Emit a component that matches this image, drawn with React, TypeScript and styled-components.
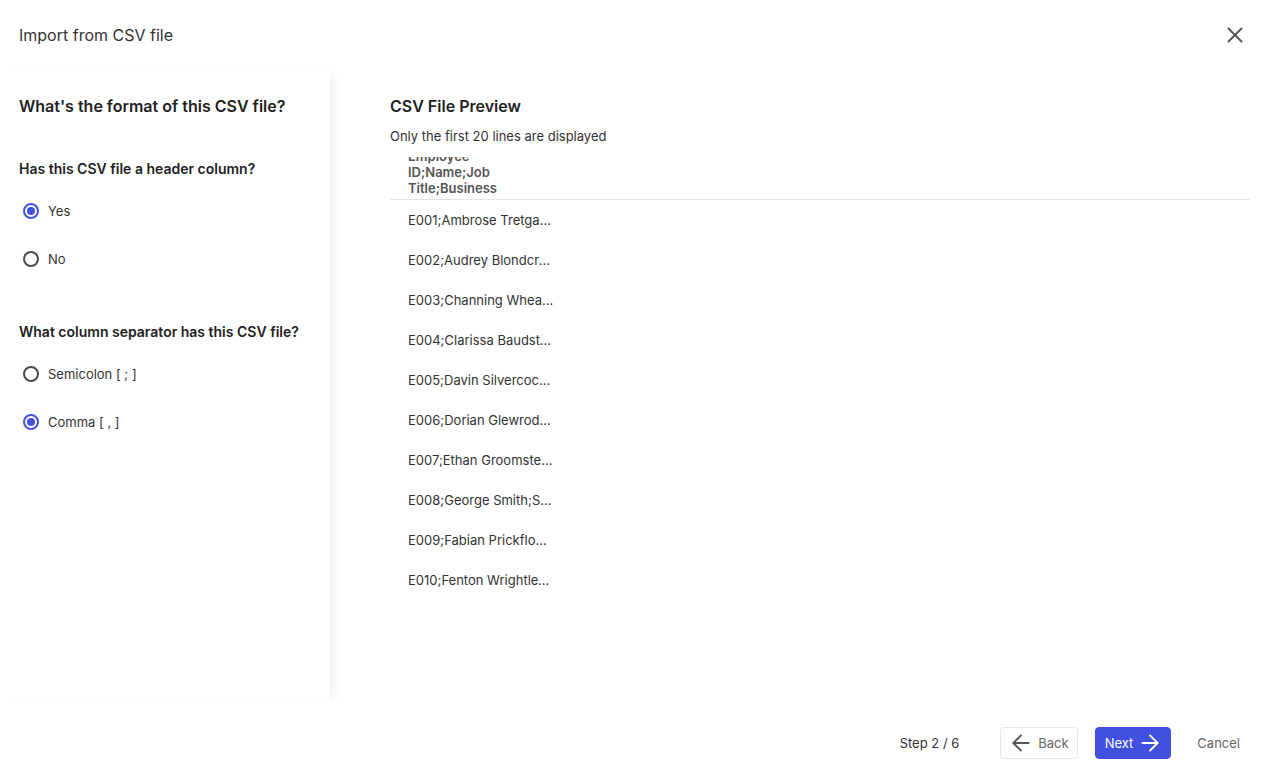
import React from "react";
import styled, { createGlobalStyle } from "styled-components";
import { ArrowLeft, ArrowRight, X } from "lucide-react";

const GlobalStyle = createGlobalStyle`
  html, body { margin: 0; padding: 0; background: #ffffff; }
  body { font-family: Inter, "Noto Sans", "Liberation Sans", sans-serif; color: #222; }
  * { box-sizing: border-box; }
`;

const Page = styled.div`
  width: 1269px;
  height: 775px;
  display: flex;
  flex-direction: column;
  background: #fff;
  overflow: hidden;
`;

const Header = styled.header`
  height: 70px;
  flex: none;
  display: flex;
  align-items: center;
  justify-content: space-between;
  padding: 0 21px 0 19px;
`;

const Title = styled.h1`
  margin: 0;
  font-size: 16px;
  font-weight: 400;
  color: #333;
  line-height: 24px;
`;

const CloseButton = styled.button`
  border: none;
  background: none;
  padding: 0;
  width: 26px;
  height: 28px;
  display: flex;
  align-items: center;
  justify-content: center;
  color: #555;
  cursor: pointer;
`;

const Body = styled.main`
  flex: 1;
  display: flex;
  min-height: 0;
`;

const Sidebar = styled.aside`
  width: 330px;
  flex: none;
  padding: 24px 19px 0;
  box-shadow: 7px 0 8px -4px rgba(0, 0, 0, 0.07);
  position: relative;
  z-index: 1;
`;

const Content = styled.section`
  flex: 1;
  padding: 24px 19px 0 60px;
  min-width: 0;
`;

const Heading = styled.h2`
  margin: 0;
  font-size: 16px;
  font-weight: 600;
  line-height: 24px;
  color: #222;
`;

const Question = styled.h3<{ $top: number }>`
  margin: ${(p) => p.$top}px 0 8px;
  font-size: 14px;
  font-weight: 600;
  line-height: 20px;
  color: #222;
`;

const RadioRow = styled.label`
  height: 48px;
  display: flex;
  align-items: center;
  gap: 9px;
  padding-left: 4px;
  font-size: 13px;
  color: #333;
  cursor: pointer;
`;

const RadioCircle = styled.span<{ $checked: boolean }>`
  width: 16px;
  height: 16px;
  border-radius: 50%;
  border: 2px solid ${(p) => (p.$checked ? "#4352e2" : "#4a4a4a")};
  display: flex;
  align-items: center;
  justify-content: center;
  flex: none;
  &::after {
    content: "";
    width: 8px;
    height: 8px;
    border-radius: 50%;
    background: ${(p) => (p.$checked ? "#4352e2" : "transparent")};
  }
`;

const Subtitle = styled.p`
  margin: 9px 0 0;
  font-size: 13px;
  line-height: 18px;
  color: #333;
`;

const Table = styled.div`
  margin-top: 12px;
`;

const HeaderRow = styled.div`
  height: 43px;
  border-bottom: 1px solid #e4e4e4;
  overflow: hidden;
  display: flex;
  align-items: flex-end;
  padding: 0 18px 3px;
`;

const HeaderCell = styled.div`
  width: 138px;
  font-size: 13px;
  font-weight: 600;
  line-height: 16px;
  color: #555;
`;

const DataRow = styled.div`
  height: 40px;
  display: flex;
  align-items: center;
  padding: 0 18px;
`;

const DataCell = styled.div`
  width: 146px;
  font-size: 13px;
  line-height: 18px;
  color: #333;
  white-space: nowrap;
  overflow: hidden;
  text-overflow: ellipsis;
`;

const Footer = styled.footer`
  height: 73px;
  flex: none;
  display: flex;
  justify-content: flex-end;
  align-items: flex-start;
  padding: 25px 20px 0 0;
  gap: 17px;
`;

const StepLabel = styled.span`
  font-size: 13px;
  line-height: 32px;
  color: #333;
  margin-right: 24px;
`;

const Button = styled.button<{ $variant: "primary" | "outline" | "ghost" }>`
  height: 32px;
  display: flex;
  align-items: center;
  gap: 4px;
  border-radius: 4px;
  font-family: inherit;
  font-size: 13px;
  cursor: pointer;
  padding: ${(p) => (p.$variant === "primary" ? "0 7px 0 9px" : p.$variant === "outline" ? "0 8px 0 7px" : "0 8px")};
  border: 1px solid ${(p) => (p.$variant === "outline" ? "#e6e6e6" : p.$variant === "primary" ? "#4150df" : "transparent")};
  background: ${(p) => (p.$variant === "primary" ? "#4150df" : "#fff")};
  color: ${(p) => (p.$variant === "primary" ? "#fff" : "#666")};
`;

const rows = [
  "E001;Ambrose Tretgarth;Software Engineer;IT",
  "E002;Audrey Blondcrest;HR Manager;HR",
  "E003;Channing Wheatley;Accountant;Finance",
  "E004;Clarissa Baudstone;Designer;Marketing",
  "E005;Davin Silvercock;Sales Rep;Sales",
  "E006;Dorian Glewrod;Analyst;Finance",
  "E007;Ethan Groomstead;Developer;IT",
  "E008;George Smith;Support;Operations",
  "E009;Fabian Prickfloor;Manager;Sales",
  "E010;Fenton Wrightley;Consultant;IT",
];

type RadioProps = { label: string; checked: boolean };

function Radio({ label, checked }: RadioProps) {
  return (
    <RadioRow>
      <RadioCircle $checked={checked} />
      {label}
    </RadioRow>
  );
}

export default function App() {
  return (
    <>
      <GlobalStyle />
      <Page>
        <Header>
          <Title>Import from CSV file</Title>
          <CloseButton aria-label="Close">
            <X size={26} strokeWidth={1.8} />
          </CloseButton>
        </Header>
        <Body>
          <Sidebar>
            <Heading>What's the format of this CSV file?</Heading>
            <Question $top={41}>Has this CSV file a header column?</Question>
            <Radio label="Yes" checked />
            <Radio label="No" checked={false} />
            <Question $top={39}>What column separator has this CSV file?</Question>
            <Radio label="Semicolon [ ; ]" checked={false} />
            <Radio label="Comma [ , ]" checked />
          </Sidebar>
          <Content>
            <Heading>CSV File Preview</Heading>
            <Subtitle>Only the first 20 lines are displayed</Subtitle>
            <Table>
              <HeaderRow>
                <HeaderCell>Employee ID;Name;Job Title;Business</HeaderCell>
              </HeaderRow>
              {rows.map((r) => (
                <DataRow key={r}>
                  <DataCell>{r}</DataCell>
                </DataRow>
              ))}
            </Table>
          </Content>
        </Body>
        <Footer>
          <StepLabel>Step 2 / 6</StepLabel>
          <Button $variant="outline">
            <ArrowLeft size={26} strokeWidth={1.8} color="#555" />
            Back
          </Button>
          <Button $variant="primary">
            Next
            <ArrowRight size={26} strokeWidth={1.8} />
          </Button>
          <Button $variant="ghost">Cancel</Button>
        </Footer>
      </Page>
    </>
  );
}
